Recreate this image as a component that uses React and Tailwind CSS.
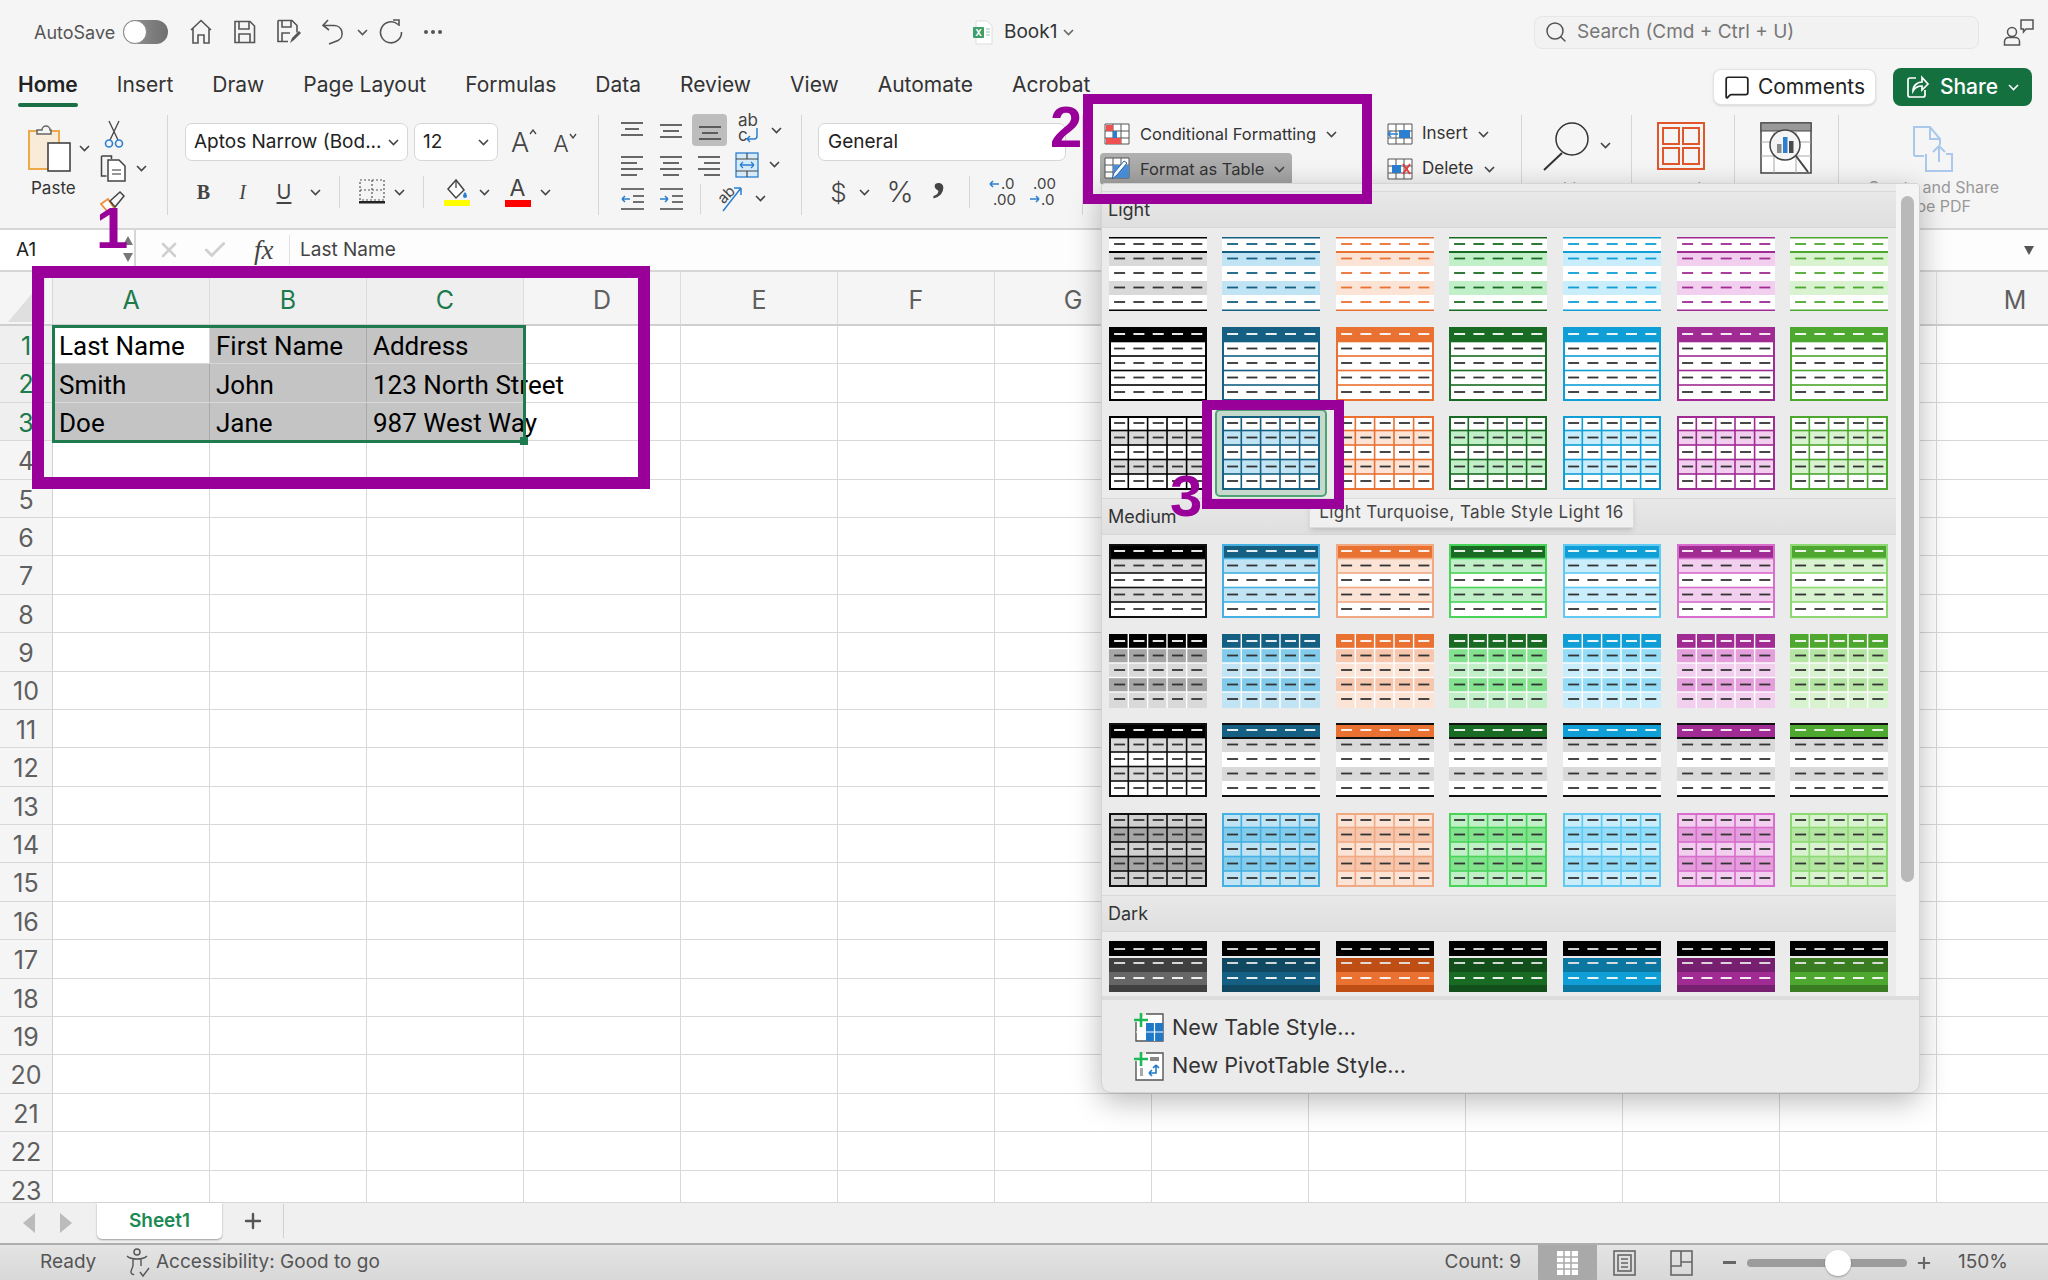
import React from 'react';
import { Search, X, Check, Plus, MessageSquare } from 'lucide-react';

const accent = ['#000000', '#156082', '#e97132', '#196b24', '#0f9ed5', '#a02b93', '#4ea72e'];
const tint20 = ['#d9d9d9', '#c1e4f5', '#fbe3d6', '#c1f0c8', '#caedfb', '#f2ceef', '#d9f2d0'];
const tint40 = ['#a6a6a6', '#83cbeb', '#f6c6ad', '#83e28e', '#95dcf7', '#e59edc', '#b4e5a2'];
const border60 = ['#111111', '#45b0e1', '#f1a983', '#47d459', '#60caf3', '#d86dcd', '#8ed973'];
const darkBand = ['#404040', '#104862', '#bf4e14', '#124f1a', '#0b76a0', '#76206f', '#3a7c22'];
const darkMid = ['#666666', '#156082', '#e97132', '#196b24', '#0f9ed5', '#a02b93', '#4ea72e'];

const columns = ['A', 'B', 'C', 'D', 'E', 'F', 'G', 'H', 'I', 'J', 'K', 'L', 'M'];
const rowNumbers = Array.from({ length: 23 }, (_, i) => i + 1);
const sheetData = [
  ['Last Name', 'First Name', 'Address'],
  ['Smith', 'John', '123 North Street'],
  ['Doe', 'Jane', '987 West Way'],
];
const tabs = ['Insert', 'Draw', 'Page Layout', 'Formulas', 'Data', 'Review', 'View', 'Automate', 'Acrobat'];

const Chev = ({ className = '', color = '#444' }) => (
  <svg width="11" height="7" viewBox="0 0 11 7" className={className}>
    <path d="M1 1l4.5 4.5L10 1" fill="none" stroke={color} strokeWidth="1.6" />
  </svg>
);

// horizontal bars used by all the alignment buttons
const Lines = ({ rows, w = 24, h = 22 }) => (
  <svg width={w} height={h} viewBox={`0 0 ${w} ${h}`}>
    {rows.map(([x1, x2, y], i) => (
      <line key={i} x1={x1} x2={x2} y1={y} y2={y} stroke="#444" strokeWidth="1.6" />
    ))}
  </svg>
);

const Dashes = ({ y, color }) => (
  <>
    {[0, 1, 2, 3, 4].map((i) => (
      <rect key={i} x={5.1 + 19.3 * i} y={y - 0.9} width="11" height="1.8" fill={color} />
    ))}
  </>
);

const cy = (i) => 7 + 14.5 * i;
const Rows = [0, 1, 2, 3, 4];
const colLines = [19.3, 38.6, 58, 77.6];

const Thumb = ({ kind, col }) => {
  const c = accent[col];
  const t = tint20[col];
  const m = tint40[col];
  const b = border60[col];
  const ink = '#333';
  const grid = (color, sw = 1.6) => (
    <>
      {[14.5, 29, 43.5, 58].map((y) => (
        <rect key={y} x="0" y={y - sw / 2} width="98" height={sw} fill={color} />
      ))}
      {colLines.map((x) => (
        <rect key={x} x={x - sw / 2} y="0" width={sw} height="74" fill={color} />
      ))}
    </>
  );
  const hLines = (color, sw = 1.6) =>
    [14.5, 29, 43.5, 58].map((y) => <rect key={y} x="0" y={y - sw / 2} width="98" height={sw} fill={color} />);
  const frame = (color) => <rect x="1" y="1" width="96" height="72" fill="none" stroke={color} strokeWidth="2" />;

  let body = null;
  if (kind === 'light1') {
    body = (
      <>
        <rect width="98" height="74" fill="#fff" />
        <rect y="15" width="98" height="14" fill={t} />
        <rect y="44" width="98" height="14" fill={t} />
        <rect width="98" height="1.5" fill={c} />
        <rect y="14" width="98" height="2" fill={c} />
        <rect y="72.5" width="98" height="1.5" fill={c} />
        {Rows.map((i) => <Dashes key={i} y={cy(i)} color={col === 0 ? '#333' : c} />)}
      </>
    );
  } else if (kind === 'light2') {
    body = (
      <>
        <rect width="98" height="74" fill="#fff" />
        <rect width="98" height="15" fill={c} />
        {hLines(c)}
        {frame(c)}
        {Rows.map((i) => <Dashes key={i} y={cy(i)} color={i === 0 ? '#fff' : ink} />)}
      </>
    );
  } else if (kind === 'light3') {
    body = (
      <>
        <rect width="98" height="74" fill="#fff" />
        <rect y="15" width="98" height="14" fill={t} />
        <rect y="44" width="98" height="14" fill={t} />
        {grid(c)}
        {frame(c)}
        {Rows.map((i) => <Dashes key={i} y={cy(i)} color={ink} />)}
      </>
    );
  } else if (kind === 'med1') {
    body = (
      <>
        <rect width="98" height="74" fill="#fff" />
        <rect y="15" width="98" height="14" fill={t} />
        <rect y="44" width="98" height="14" fill={t} />
        <rect width="98" height="15" fill={c} />
        {hLines(b)}
        {frame(b)}
        {Rows.map((i) => <Dashes key={i} y={cy(i)} color={i === 0 ? '#fff' : ink} />)}
      </>
    );
  } else if (kind === 'med2') {
    body = (
      <>
        <rect width="98" height="15" fill={c} />
        <rect y="15" width="98" height="14.5" fill={m} />
        <rect y="29.5" width="98" height="14.5" fill={t} />
        <rect y="44" width="98" height="14.5" fill={m} />
        <rect y="58.5" width="98" height="15.5" fill={t} />
        {grid('#ffffff', 1.4)}
        {Rows.map((i) => <Dashes key={i} y={cy(i)} color={i === 0 ? '#fff' : ink} />)}
      </>
    );
  } else if (kind === 'med3') {
    body = col === 0 ? (
      <>
        <rect width="98" height="74" fill="#fff" />
        <rect y="15" width="98" height="14" fill="#d9d9d9" />
        <rect y="44" width="98" height="14" fill="#d9d9d9" />
        {grid('#111')}
        <rect width="98" height="15" fill="#000" />
        {frame('#111')}
        {Rows.map((i) => <Dashes key={i} y={cy(i)} color={i === 0 ? '#fff' : ink} />)}
      </>
    ) : (
      <>
        <rect width="98" height="74" fill="#fff" />
        <rect y="1" width="98" height="14" fill={c} />
        <rect y="15" width="98" height="14" fill="#d9d9d9" />
        <rect y="44" width="98" height="14" fill="#d9d9d9" />
        <rect width="98" height="2" fill="#111" />
        <rect y="14" width="98" height="2" fill="#111" />
        <rect y="72" width="98" height="2" fill="#111" />
        {Rows.map((i) => <Dashes key={i} y={cy(i)} color={i === 0 ? '#fff' : ink} />)}
      </>
    );
  } else if (kind === 'med4') {
    const light = col === 0 ? '#d0d0d0' : t;
    const line = col === 0 ? '#111' : b;
    body = (
      <>
        <rect width="98" height="74" fill={light} />
        <rect y="15" width="98" height="14" fill={m} />
        <rect y="44" width="98" height="14" fill={m} />
        {grid(line)}
        {frame(line)}
        {Rows.map((i) => <Dashes key={i} y={cy(i)} color={ink} />)}
      </>
    );
  } else {
    body = (
      <>
        <rect width="98" height="15" fill="#000" />
        <rect y="17" width="98" height="14" fill={darkBand[col]} />
        <rect y="31" width="98" height="13" fill={darkMid[col]} />
        <rect y="44" width="98" height="7" fill={darkBand[col]} />
        <Dashes y={8} color="#e8e8e8" />
        <Dashes y={22} color="#e8e8e8" />
        <Dashes y={37} color="#ffffff" />
      </>
    );
  }
  return (
    <svg width="98" height={kind === 'dark' ? 51 : 74} viewBox={`0 0 98 ${kind === 'dark' ? 51 : 74}`} className="block">
      {body}
    </svg>
  );
};

const SectionHeader = ({ label }) => (
  <div className="h-[37px] pl-[6px] flex items-center text-[18px] text-[#333] bg-gradient-to-b from-[#e8e8e8] to-[#dfdfdf] border-t border-b border-[#d8d8d8]">
    {label}
  </div>
);

const ThumbGrid = ({ kinds }) => (
  <div className="grid grid-cols-[repeat(7,98px)] gap-x-[15.6px] gap-y-[15.6px] pl-[6.6px] pt-[9px] pb-[8px]">
    {kinds.map((kind, r) =>
      accent.map((_, col) => {
        const selected = kind === 'light3' && col === 1;
        return (
          <div key={`${r}-${col}`} className="relative">
            {selected && (
              <div className="absolute -left-[7px] -right-[7px] -top-[7px] -bottom-[7px] rounded-[5px] bg-[#c5d9cd] border-2 border-[#4fa377]" />
            )}
            <div className="relative">
              <Thumb kind={kind} col={col} />
            </div>
          </div>
        );
      })
    )}
  </div>
);

const TableStylePopup = () => (
  <div className="absolute left-[1101px] top-[183px] w-[819px] h-[910px] z-20 rounded-b-[10px] rounded-t-[4px] bg-[#ebebeb] shadow-[0_8px_30px_rgba(0,0,0,0.28)] border border-[#d4d4d4] flex flex-col overflow-hidden">
    <div className="flex h-[812px] pt-[7px] shrink-0">
      <div className="w-[795px] overflow-hidden">
        <SectionHeader label="Light" />
        <ThumbGrid kinds={['light1', 'light2', 'light3']} />
        <SectionHeader label="Medium" />
        <ThumbGrid kinds={['med1', 'med2', 'med3', 'med4']} />
        <SectionHeader label="Dark" />
        <ThumbGrid kinds={['dark']} />
      </div>
      <div className="w-[23px] bg-[#f4f4f4] pl-[5px] pt-[4px] -mt-[7px]">
        <div className="w-[13px] h-[686px] mt-[8px] rounded-full bg-[#b9b9b9]" />
      </div>
    </div>
    <div className="flex-1 border-t-[4px] border-[#dcdcdc] pl-[32px] pt-[8px] text-[21.6px] text-[#333]">
      <div className="h-[38px] flex items-center gap-[8px]">
        <NewTableIcon />
        <span>New Table Style...</span>
      </div>
      <div className="h-[39px] flex items-center gap-[8px]">
        <NewPivotIcon />
        <span>New PivotTable Style...</span>
      </div>
    </div>
  </div>
);

const NewTableIcon = () => (
  <svg width="30" height="30" viewBox="0 0 30 30">
    <path d="M2 10v19h27V2H12" fill="#fff" stroke="#555" strokeWidth="1.4" />
    <rect x="12" y="11" width="17" height="18" fill="#1f78c8" />
    <path d="M20.5 11v18M12 20h17M2 20h10" stroke="#fff" strokeWidth="1.2" />
    <path d="M7 1v14M0 8h14" stroke="#1db954" strokeWidth="2.6" />
  </svg>
);

const NewPivotIcon = () => (
  <svg width="30" height="30" viewBox="0 0 30 30">
    <path d="M2 10v19h27V2H12" fill="#fff" stroke="#555" strokeWidth="1.4" />
    <rect x="16" y="6" width="9" height="4" fill="#888" />
    <rect x="6" y="17" width="3" height="8" fill="#aaa" />
    <path d="M22 14v8h-7M15 22l3-3M15 22l3 3M22 14l-3 3M22 14l3 3" fill="none" stroke="#1f78c8" strokeWidth="1.6" />
    <path d="M7 1v14M0 8h14" stroke="#1db954" strokeWidth="2.6" />
  </svg>
);

const TitleBar = () => (
  <div className="h-[56px] pt-[8px] shrink-0 flex items-center text-[#555]">
    <div className="w-[973px] flex items-center pl-[34px]">
      <span className="text-[18px] text-[#555] w-[89px]">AutoSave</span>
      <div className="w-[45px] h-[24px] rounded-full bg-gradient-to-r from-[#9a9a9a] to-[#6f6f6f] relative">
        <div className="absolute left-0 top-0 w-[24px] h-[24px] rounded-full bg-white border border-[#888]" />
      </div>
      <svg width="24" height="26" viewBox="0 0 24 26" className="ml-[21px]">
        <path d="M2 11 12 1.5 22 11M4 9v15h5v-8h6v8h5V9" fill="none" stroke="#555" strokeWidth="1.6" />
      </svg>
      <svg width="23" height="24" viewBox="0 0 23 24" className="ml-[20px]">
        <path d="M2 1.5h15l4.5 4.5v16.5H2z" fill="none" stroke="#555" strokeWidth="1.6" />
        <path d="M6 2v7h10V2M6 22v-8h11v8" fill="none" stroke="#555" strokeWidth="1.6" />
      </svg>
      <svg width="26" height="26" viewBox="0 0 26 26" className="ml-[20px]">
        <path d="M2 1.5h14l5 5v7M2 1.5v21h10M6 2v6h9V2M6 22v-8h8" fill="none" stroke="#555" strokeWidth="1.6" />
        <path d="M14 24l2-5 7-7 2 2-7 7z" fill="#555" />
      </svg>
      <svg width="24" height="26" viewBox="0 0 24 26" className="ml-[19px]">
        <path d="M7 1 2 6.5 8 11M2.5 6.5H13a8 8 0 0 1 4 15L8 25" fill="none" stroke="#555" strokeWidth="1.6" />
      </svg>
      <Chev className="ml-[12px]" color="#555" />
      <svg width="24" height="26" viewBox="0 0 24 26" className="ml-[11px]">
        <path d="M19 5.5A10.5 10.5 0 1 0 22.5 13M14 1h6v6" fill="none" stroke="#555" strokeWidth="1.6" />
      </svg>
      <span className="ml-[21px] flex gap-[3px]">
        <i className="w-[4px] h-[4px] rounded-full bg-[#555]" />
        <i className="w-[4px] h-[4px] rounded-full bg-[#555]" />
        <i className="w-[4px] h-[4px] rounded-full bg-[#555]" />
      </span>
    </div>
    <div className="w-[561px] flex items-center">
      <svg width="21" height="25" viewBox="0 0 21 25">
        <path d="M3 1h11l5 5v18H3z" fill="#fff" stroke="#ddd" />
        <rect y="7" width="11" height="11" rx="1" fill="#3f9e6a" />
        <text x="5.5" y="16" textAnchor="middle" fontSize="9" fontWeight="700" fill="#fff">X</text>
        <path d="M13 9h4M13 12h4M13 15h4" stroke="#9ac4ac" strokeWidth="1.2" />
      </svg>
      <span className="ml-[10px] text-[19px] text-[#333]">Book1</span>
      <Chev className="ml-[6px]" color="#666" />
    </div>
    <div className="w-[445px] h-[33px] rounded-[8px] border border-[#e6e6e6] bg-[#f2f2f2] flex items-center pl-[9px] text-[19px] text-[#777] gap-[9px]">
      <Search size={24} strokeWidth={1.5} color="#555" />
      <span>Search (Cmd + Ctrl + U)</span>
    </div>
    <svg width="32" height="27" viewBox="0 0 32 27" className="ml-[24px]">
      <circle cx="9" cy="13" r="4.5" fill="none" stroke="#555" strokeWidth="1.5" />
      <path d="M1.5 26v-3.5a4 4 0 0 1 4-4h7a4 4 0 0 1 4 4V26z" fill="none" stroke="#555" strokeWidth="1.5" />
      <path d="M18 1h12v9h-7l-2.5 3v-3H18z" fill="none" stroke="#555" strokeWidth="1.5" />
    </svg>
  </div>
);

const TabsRow = () => (
  <div className="h-[54px] shrink-0 flex items-start pl-[18px] text-[21px] text-[#333]">
    <div className="flex gap-[39px] h-[54px] pt-[13px]">
      <div className="relative font-semibold text-[#222]">
        Home
        <div className="absolute left-0 right-0 top-[34px] h-[4px] rounded-full bg-[#1a7044]" />
      </div>
      {tabs.map((t) => (
        <div key={t}>{t}</div>
      ))}
    </div>
    <div className="ml-auto mt-[12px] flex items-center">
      <div className="w-[163px] h-[36px] rounded-[8px] bg-white border border-[#e2e2e2] shadow-sm flex items-center justify-center gap-[8px] text-[#222]">
        <MessageSquare size={26} strokeWidth={1.6} color="#222" />
        <span>Comments</span>
      </div>
      <div className="ml-[17px] mr-[16px] w-[139px] h-[38px] rounded-[8px] bg-[#14713f] text-white font-medium flex items-center justify-center gap-[10px]">
        <svg width="24" height="24" viewBox="0 0 24 24" fill="none" stroke="#fff" strokeWidth="1.7">
          <path d="M10 3H4a2 2 0 0 0-2 2v15a2 2 0 0 0 2 2h13a2 2 0 0 0 2-2v-5M7 16c0-6 5-9 9-9V2.500l6 6.500-6 6v-4c-4 0-7 1.500-9 5z" />
        </svg>
        <span>Share</span>
        <Chev color="#fff" />
      </div>
    </div>
  </div>
);

const ClipboardGroup = () => (
  <div className="w-[168px] h-[100px] shrink-0 border-r border-[#d6d6d6] flex pl-[27px]">
    <div className="w-[73px] pt-[8px]">
      <div className="flex items-center">
        <svg width="46" height="50" viewBox="0 0 46 50">
          <rect x="2" y="8" width="30" height="38" fill="#f8ecd9" stroke="#eda84a" strokeWidth="2" />
          <path d="M10 11V7h5a4 4 0 0 1 8 0h1v4z" fill="#f4f4f4" stroke="#666" strokeWidth="1.5" />
          <rect x="21" y="20" width="22" height="28" fill="#fff" stroke="#444" strokeWidth="1.6" />
        </svg>
        <Chev className="ml-[6px]" />
      </div>
      <div className="text-[17px] text-[#333] mt-[3px] pl-[4px]">Paste</div>
    </div>
    <div className="flex flex-col pt-[5px]">
      <svg width="20" height="28" viewBox="0 0 20 28" className="ml-[4px]">
        <path d="M5 1l9 19M15 1 6 20" stroke="#444" strokeWidth="1.3" fill="none" />
        <circle cx="5" cy="23.500" r="3.500" fill="none" stroke="#2a7fd1" strokeWidth="1.6" />
        <circle cx="15" cy="23.500" r="3.500" fill="none" stroke="#2a7fd1" strokeWidth="1.6" />
      </svg>
      <div className="flex items-center mt-[7px]">
        <svg width="28" height="27" viewBox="0 0 28 27">
          <path d="M1.500 1h10v3M1.500 1v20h5" fill="none" stroke="#444" strokeWidth="1.5" />
          <path d="M8 5h11l6 6v15H8z" fill="#fff" stroke="#444" strokeWidth="1.5" />
          <path d="M12 15h9M12 19h9" stroke="#777" strokeWidth="1.3" />
        </svg>
        <Chev className="ml-[8px]" />
      </div>
      <svg width="28" height="24" viewBox="0 0 28 24" className="mt-[7px]">
        <path d="M1 15l7-5 6 9-6 4z" fill="#fff" stroke="#ef8d3a" strokeWidth="1.8" />
        <path d="M10 12 20 3l4 4-9 11z" fill="none" stroke="#444" strokeWidth="1.5" />
      </svg>
    </div>
  </div>
);

const Select = ({ width, label, className = '' }) => (
  <div className={`${width} h-[38px] rounded-[7px] bg-white border border-[#d6d6d6] flex items-center pl-[8px] pr-[8px] text-[19px] text-[#222] justify-between ${className}`}>
    <span className="truncate">{label}</span>
    <Chev />
  </div>
);

const FontGroup = () => (
  <div className="w-[431px] h-[100px] shrink-0 border-r border-[#d6d6d6] pl-[17px] pt-[8px]">
    <div className="flex items-center">
      <Select width="w-[223px]" label="Aptos Narrow (Bod..." />
      <Select width="w-[84px]" label="12" className="ml-[6px]" />
      <div className="ml-[13px] text-[27px] text-[#444] font-light leading-none relative">
        A
        <svg width="8" height="6" viewBox="0 0 8 6" className="absolute -right-[8px] top-0">
          <path d="M1 5l3-4 3 4" fill="none" stroke="#444" strokeWidth="1.300" />
        </svg>
      </div>
      <div className="ml-[24px] text-[23px] text-[#444] font-light leading-none relative mt-[4px]">
        A
        <svg width="8" height="6" viewBox="0 0 8 6" className="absolute -right-[8px] top-0">
          <path d="M1 1l3 4 3-4" fill="none" stroke="#444" strokeWidth="1.300" />
        </svg>
      </div>
    </div>
    <div className="flex items-center h-[32px] mt-[15px] text-[#444]">
      <div className="w-[37px] text-center text-[20px] font-bold font-['Liberation_Serif',serif]">B</div>
      <div className="w-[41px] text-center text-[20px] italic font-['Liberation_Serif',serif]">I</div>
      <div className="w-[42px] text-center text-[20px] underline underline-offset-[3px]">U</div>
      <Chev className="ml-[5px]" />
      <div className="ml-[18px] w-px h-[32px] bg-[#d6d6d6]" />
      <svg width="26" height="26" viewBox="0 0 26 26" className="ml-[19px]">
        <path d="M1 1h24v20H1zM13 1v20M1 11h24" fill="none" stroke="#555" strokeWidth="1.2" strokeDasharray="2 2" />
        <rect x="0" y="22" width="26" height="2.500" fill="#222" />
      </svg>
      <Chev className="ml-[9px]" />
      <div className="ml-[18px] w-px h-[32px] bg-[#d6d6d6]" />
      <svg width="28" height="28" viewBox="0 0 28 28" className="ml-[19px]">
        <path d="M13 2 5 11l8 9 8-8z" fill="#fff" stroke="#444" strokeWidth="1.500" />
        <path d="M13 2v8" stroke="#444" strokeWidth="1.300" />
        <path d="M22 14c1.500 2 2 3 2 4a2 2 0 0 1-4 0c0-1 .500-2 2-4z" fill="#2a7fd1" />
        <rect x="1" y="22" width="26" height="6" fill="#ffff00" />
      </svg>
      <Chev className="ml-[8px]" />
      <div className="ml-[14px] w-[27px] h-[32px] flex flex-col items-center text-[#444] text-[23px] leading-[24px]">
        A
        <div className="w-[26px] h-[7px] bg-[#ff0000]" />
      </div>
      <Chev className="ml-[9px]" />
    </div>
  </div>
);

const AlignGroup = () => (
  <div className="w-[203px] h-[100px] shrink-0 border-r border-[#d6d6d6] pl-[22px] flex flex-col">
    <div className="flex items-center h-[36px] -mt-[2px]">
      <div className="w-[38px]"><Lines rows={[[0, 22, 4], [4, 18, 10], [0, 22, 16]]} /></div>
      <div className="w-[33px]"><Lines rows={[[1, 23, 6], [4, 20, 12], [1, 23, 18]]} /></div>
      <div className="w-[35px] h-[32px] rounded-[4px] bg-[#bdbdbd] flex items-center justify-center">
        <Lines rows={[[1, 23, 8], [4, 20, 14], [1, 23, 20]]} />
      </div>
      <svg width="24" height="34" viewBox="0 0 24 34" className="ml-[10px]">
        <text x="1" y="13" fontSize="17" fill="#444">ab</text>
        <text x="1" y="28" fontSize="17" fill="#444">c</text>
        <path d="M20 15v8a3 3 0 0 1-3 3h-7M10 26l3-3M10 26l3 3" fill="none" stroke="#2a7fd1" strokeWidth="1.500" />
      </svg>
      <Chev className="ml-[10px]" />
    </div>
    <div className="flex items-center h-[36px]">
      <div className="w-[38px]"><Lines rows={[[0, 22, 3], [0, 16, 9], [0, 22, 15], [0, 16, 21]]} /></div>
      <div className="w-[38px]"><Lines rows={[[1, 23, 3], [4, 20, 9], [1, 23, 15], [4, 20, 21]]} /></div>
      <div className="w-[38px]"><Lines rows={[[1, 23, 3], [7, 23, 9], [1, 23, 15], [7, 23, 21]]} /></div>
      <svg width="24" height="26" viewBox="0 0 24 26">
        <rect x="1" y="1" width="22" height="24" fill="#d6eaf8" stroke="#2a7fd1" strokeWidth="1.300" />
        <path d="M1 7h22M1 19h22M12 1v6M12 19v6" stroke="#444" strokeWidth="1.200" />
        <path d="M5 13h14M5 13l3-3M5 13l3 3M19 13l-3-3M19 13l-3 3" fill="none" stroke="#2a7fd1" strokeWidth="1.300" />
      </svg>
      <Chev className="ml-[10px]" />
    </div>
    <div className="flex items-center h-[34px]">
      <div className="w-[38px]">
        <svg width="24" height="22" viewBox="0 0 24 22">
          <path d="M0 1h23M12 8h11M12 14h11M0 21h23" stroke="#444" strokeWidth="1.600" />
          <path d="M1 11h8M1 11l3-3M1 11l3 3" fill="none" stroke="#2a7fd1" strokeWidth="1.500" />
        </svg>
      </div>
      <div className="w-[35px]">
        <svg width="24" height="22" viewBox="0 0 24 22">
          <path d="M1 1h23M13 8h11M13 14h11M1 21h23" stroke="#444" strokeWidth="1.600" />
          <path d="M1 11h8M9 11l-3-3M9 11l-3 3" fill="none" stroke="#2a7fd1" strokeWidth="1.500" />
        </svg>
      </div>
      <div className="w-px h-[30px] bg-[#d6d6d6] ml-[6px]" />
      <svg width="30" height="30" viewBox="0 0 30 30" className="ml-[16px]">
        <text x="1" y="17" fontSize="15" fill="#444" transform="rotate(-45 8 12)">ab</text>
        <path d="M6 27 24 4M24 4h-7M24 4v7" fill="none" stroke="#2a7fd1" strokeWidth="1.500" />
      </svg>
      <Chev className="ml-[8px]" />
    </div>
  </div>
);

const NumberGroup = () => (
  <div className="w-[281px] h-[100px] shrink-0 border-r border-[#d6d6d6] pl-[16px] pt-[8px]">
    <div className="w-[248px] h-[38px] rounded-[7px] bg-white border border-[#d6d6d6] flex items-center pl-[9px] text-[19px] text-[#222]">
      General
    </div>
    <div className="flex items-center h-[32px] mt-[15px] pl-[10px] text-[#444]">
      <span className="text-[26px] font-light w-[21px] text-center">$</span>
      <Chev className="ml-[10px]" />
      <span className="text-[29px] font-light ml-[14px] w-[32px] text-center">%</span>
      <span className="text-[50px] ml-[15px] w-[16px] text-center font-bold leading-[50px] -mt-[38px] font-['Liberation_Serif',serif]">,</span>
      <div className="ml-[22px] w-px h-[32px] bg-[#d6d6d6]" />
      <svg width="27" height="30" viewBox="0 0 27 30" className="ml-[19px]">
        <text x="12" y="12" fontSize="15" fill="#444">.0</text>
        <text x="4" y="28" fontSize="15" fill="#444">.00</text>
        <path d="M1 7h9M1 7l3-3M1 7l3 3" fill="none" stroke="#2a7fd1" strokeWidth="1.500" />
      </svg>
      <svg width="27" height="30" viewBox="0 0 27 30" className="ml-[13px]">
        <text x="4" y="12" fontSize="15" fill="#444">.00</text>
        <text x="12" y="28" fontSize="15" fill="#444">.0</text>
        <path d="M1 22h9M10 22l-3-3M10 22l-3 3" fill="none" stroke="#2a7fd1" strokeWidth="1.500" />
      </svg>
    </div>
  </div>
);

const gridCells = 'M1 1h24v20H1zM9 1v20M17 1v20M1 8h24M1 15h24';

const StylesGroup = () => (
  <div className="w-[291px] h-[100px] shrink-0 pl-[21px] pt-[2px] text-[16.5px] text-[#333]">
    <div className="flex items-center h-[32px] mt-[1px]">
      <svg width="26" height="22" viewBox="0 0 26 22">
        <path d={gridCells} fill="#fff" stroke="#555" strokeWidth="1" />
        <rect x="2" y="2" width="7" height="6" fill="#f05050" />
        <rect x="2" y="15" width="15" height="6" fill="#f05050" />
        <rect x="9" y="8" width="4" height="7" fill="#2a7fd1" />
      </svg>
      <span className="ml-[10px]">Conditional Formatting</span>
      <Chev className="ml-[10px]" />
    </div>
    <div className="flex items-center h-[32px] mt-[3px] -ml-[4px] pl-[4px] w-[192px] rounded-[4px] bg-gradient-to-b from-[#b0b0b0] to-[#a0a0a0]">
      <svg width="26" height="24" viewBox="0 0 26 24">
        <path d={gridCells} fill="#fff" stroke="#555" strokeWidth="1" />
        <rect x="9" y="8" width="16" height="13" fill="#4a90d9" />
        <path d="M8 22l2-6 10-12 3 2-10 12z" fill="#fff" stroke="#2a6ab0" strokeWidth="1" />
      </svg>
      <span className="ml-[10px]">Format as Table</span>
      <Chev className="ml-[10px]" />
    </div>
  </div>
);

const CellsGroup = () => (
  <div className="w-[148px] h-[100px] shrink-0 pl-[13px] pt-[3px] text-[17px] text-[#333] border-r border-[#d6d6d6]">
    <div className="flex items-center h-[32px]">
      <svg width="26" height="22" viewBox="0 0 26 22">
        <path d={gridCells} fill="#fff" stroke="#555" strokeWidth="1" />
        <rect x="12" y="7" width="11" height="8" fill="#2a7fd1" />
        <path d="M1 11h10M1 11l3-3M1 11l3 3" fill="none" stroke="#2a7fd1" strokeWidth="1.500" />
      </svg>
      <span className="ml-[9px]">Insert</span>
      <Chev className="ml-[10px]" />
    </div>
    <div className="flex items-center h-[32px] mt-[3px]">
      <svg width="26" height="22" viewBox="0 0 26 22">
        <path d={gridCells} fill="#fff" stroke="#555" strokeWidth="1" />
        <rect x="5" y="7" width="9" height="8" fill="#2a7fd1" />
        <path d="M16 6l7 10M23 6l-7 10" stroke="#e23a3a" strokeWidth="1.800" />
      </svg>
      <span className="ml-[9px]">Delete</span>
      <Chev className="ml-[10px]" />
    </div>
  </div>
);

const BigGroup = ({ width, label, children, padding }) => (
  <div className={`${width} h-[100px] shrink-0 border-r border-[#d6d6d6] ${padding} pt-[7px] flex flex-col`}>
    <div className="h-[54px] flex items-start">{children}</div>
    <div className="text-[17px] text-[#333] mt-[2px]">{label}</div>
  </div>
);

const Ribbon = () => (
  <div className="h-[118px] shrink-0 flex pt-[5px]">
    <ClipboardGroup />
    <FontGroup />
    <AlignGroup />
    <NumberGroup />
    <StylesGroup />
    <CellsGroup />
    <BigGroup width="w-[110px]" label="Editing" padding="pl-[20px]">
      <svg width="48" height="50" viewBox="0 0 48 50">
        <circle cx="30" cy="17" r="16" fill="none" stroke="#333" strokeWidth="1.500" />
        <path d="M20 31 2 48" stroke="#333" strokeWidth="2" />
      </svg>
      <Chev className="ml-[10px] mt-[20px]" />
    </BigGroup>
    <BigGroup width="w-[103px]" label="Add-ins" padding="pl-[25px]">
      <svg width="48" height="48" viewBox="0 0 48 48" fill="none" stroke="#e0572c" strokeWidth="2">
        <rect x="1" y="1" width="46" height="46" />
        <rect x="6" y="6" width="16" height="16" />
        <rect x="26" y="6" width="16" height="16" />
        <rect x="6" y="26" width="16" height="16" />
        <rect x="26" y="26" width="16" height="16" />
      </svg>
    </BigGroup>
    <BigGroup width="w-[104px]" label="Analyze" padding="pl-[25px]">
      <svg width="52" height="52" viewBox="0 0 52 52">
        <rect x="1" y="1" width="50" height="50" fill="#fff" stroke="#444" strokeWidth="1.500" />
        <rect x="1" y="1" width="50" height="8" fill="#999" stroke="#444" />
        <path d="M1 20h50M1 34h50M14 9v42M36 9v42" stroke="#aaa" strokeWidth="1" />
        <circle cx="25" cy="23" r="15" fill="#f4f4f4" stroke="#444" strokeWidth="1.500" />
        <rect x="17" y="22" width="4.500" height="9" fill="#888" />
        <rect x="23" y="15" width="4.500" height="16" fill="#2a7fd1" />
        <rect x="29" y="19" width="4.500" height="12" fill="#4a4a4a" />
        <path d="M36 34 48 50" stroke="#444" strokeWidth="2" />
      </svg>
    </BigGroup>
    <div className="flex-1 h-[100px] pl-[73px] pt-[11px]">
      <svg width="42" height="46" viewBox="0 0 42 46" fill="none" stroke="#a9c8ec" strokeWidth="2">
        <path d="M2 30V1h16l10 12v6M18 1v12h10M2 30h10" />
        <path d="M14 28v17h26V28h-6M27 36V20M21 26l6-6 6 6" />
      </svg>
      <div className="text-[16px] text-[#999] leading-[19px] mt-[6px] whitespace-nowrap -ml-[80px]">
        <div className="text-right w-[167px]">Create and Share</div>
        <div className="text-right w-[139px]">Adobe PDF</div>
      </div>
    </div>
  </div>
);

const FormulaBar = () => (
  <div className="h-[44px] shrink-0 flex items-center border-t-[2px] border-b-[2px] border-[#d6d6d6] bg-[#fdfdfd]">
    <div className="w-[136px] h-full bg-white border-r-[2px] border-[#d6d6d6] flex items-center pl-[16px] text-[19px] text-[#222] relative">
      A1
      <div className="absolute right-[1px] top-[6px] flex flex-col gap-[8px]">
        <div className="w-0 h-0 border-l-[5px] border-r-[5px] border-b-[9px] border-l-transparent border-r-transparent border-b-[#777]" />
        <div className="w-0 h-0 border-l-[5px] border-r-[5px] border-t-[9px] border-l-transparent border-r-transparent border-t-[#777]" />
      </div>
    </div>
    <X size={24} strokeWidth={2.6} color="#d0d0d0" className="ml-[21px]" />
    <Check size={26} strokeWidth={2.6} color="#d0d0d0" className="ml-[21px]" />
    <span className="ml-[26px] text-[27px] italic font-['Liberation_Serif',serif] text-[#444] w-[35px]">fx</span>
    <div className="w-px h-[30px] bg-[#e0e0e0]" />
    <span className="ml-[10px] text-[19px] text-[#444]">Last Name</span>
    <div className="ml-auto mr-[14px] w-0 h-0 border-l-[5px] border-r-[5px] border-t-[9px] border-l-transparent border-r-transparent border-t-[#555]" />
  </div>
);

const Sheet = () => (
  <div className="flex-1 min-h-0 overflow-hidden relative bg-white">
    <div className="flex h-[54px] bg-[#f5f5f5] border-b-[2px] border-[#cfcfcf]">
      <div className="w-[53px] shrink-0 border-r border-[#d8d8d8] pl-[8px] pt-[6px]">
        <svg width="38" height="44" viewBox="0 0 38 44"><path d="M37 0v44H0z" fill="#dfdfdf" /></svg>
      </div>
      {columns.map((c, i) => (
        <div
          key={c}
          className={`w-[157px] shrink-0 pt-[5px] border-r border-[#dcdcdc] flex items-center justify-center text-[25px] ${i < 3 ? 'bg-[#efefef] text-[#1d7a4d]' : 'text-[#5f5f5f]'}`}
        >
          {c}
        </div>
      ))}
    </div>
    {rowNumbers.map((n, r) => (
      <div key={n} className="flex h-[38.4px] border-b border-[#d8d8d8]">
        <div className={`w-[53px] shrink-0 pt-[4px] border-r border-[#d0d0d0] flex items-center justify-center text-[25px] ${r < 3 ? 'bg-[#efefef] text-[#1d7a4d]' : 'bg-[#f5f5f5] text-[#5f5f5f]'}`}>
          {n}
        </div>
        {columns.map((c, i) => {
          const inRange = r < 3 && i < 3;
          const gray = inRange && !(r === 0 && i === 0);
          return (
            <div
              key={c}
              className={`w-[157px] shrink-0 pt-[4px] border-r flex items-center pl-[6px] text-[26px] text-black whitespace-nowrap font-['Roboto',sans-serif] ${gray ? 'bg-[#c4c4c4] border-[#a9a9a9]' : 'border-[#d8d8d8]'}`}
            >
              {inRange ? sheetData[r][i] : ''}
            </div>
          );
        })}
      </div>
    ))}
    {/* selection box lies over the cells */}
    <div className="absolute left-[52px] top-[53px] w-[474px] h-[118px] border-[3px] border-[#1f7a4f] pointer-events-none">
      <div className="absolute -right-[5px] -bottom-[5px] w-[8px] h-[8px] bg-[#1f7a4f]" />
    </div>
  </div>
);

const SheetTabs = () => (
  <div className="h-[41px] shrink-0 flex bg-[#f0f0f0] border-t border-[#d6d6d6]">
    <div className="w-[97px] flex items-center pl-[23px] gap-[25px]">
      <div className="w-0 h-0 border-t-[10px] border-b-[10px] border-r-[12px] border-t-transparent border-b-transparent border-r-[#bbb]" />
      <div className="w-0 h-0 border-t-[10px] border-b-[10px] border-l-[12px] border-t-transparent border-b-transparent border-l-[#bbb]" />
    </div>
    <div className="w-[125px] h-[36px] rounded-b-[5px] bg-white shadow-[0_1px_2px_rgba(0,0,0,0.35)] flex items-center justify-center text-[19px] font-semibold text-[#1d8a55]">
      Sheet1
    </div>
    <div className="w-[62px] h-[34px] mt-[1px] border-r border-[#d0d0d0] flex items-center justify-center">
      <Plus size={24} strokeWidth={2.4} color="#555" />
    </div>
  </div>
);

const StatusBar = () => (
  <div className="h-[37px] shrink-0 flex items-center bg-gradient-to-b from-[#e4e4e4] to-[#d8d8d8] border-t-[2px] border-[#aeaeae] text-[19px] text-[#555]">
    <span className="ml-[40px] w-[86px]">Ready</span>
    <svg width="26" height="30" viewBox="0 0 26 30" fill="none" stroke="#555" strokeWidth="1.400">
      <circle cx="11" cy="4" r="3" />
      <path d="M1 8c3 3 6 3 10 3s7 0 10-3M7 11v6c0 3-2 4-2 7 0 2 2 3 3 2M15 11v7" />
      <path d="M14 24l3 4 6-8" />
    </svg>
    <span className="ml-[4px]">Accessibility: Good to go</span>
    <span className="ml-auto">Count: 9</span>
    <div className="ml-[17px] w-[59px] h-full bg-[#a9a9a9] flex items-center justify-center">
      <svg width="21" height="24" viewBox="0 0 21 24">
        <rect width="21" height="24" fill="#fff" />
        <path d="M7 0v24M14 0v24M0 6h21M0 12h21M0 18h21" stroke="#a9a9a9" strokeWidth="1.500" />
      </svg>
    </div>
    <svg width="23" height="26" viewBox="0 0 23 26" fill="none" stroke="#666" strokeWidth="1.600" className="ml-[16px]">
      <rect x="1" y="1" width="21" height="24" />
      <rect x="5" y="5" width="13" height="16" />
      <path d="M8 9h7M8 13h7M8 17h7" />
    </svg>
    <svg width="23" height="26" viewBox="0 0 23 26" fill="none" stroke="#666" strokeWidth="1.600" className="ml-[34px]">
      <rect x="1" y="1" width="21" height="24" />
      <path d="M1 16h10V1M11 12h11" />
    </svg>
    <div className="ml-[30px] w-[13px] h-[3px] bg-[#666]" />
    <div className="ml-[11px] w-[160px] h-[8px] rounded-full bg-[#9c9c9c] relative">
      <div className="absolute left-[78px] -top-[9px] w-[26px] h-[26px] rounded-full bg-white shadow-[0_1px_2px_rgba(0,0,0,0.3)]" />
    </div>
    <Plus size={18} strokeWidth={2.8} color="#666" className="ml-[8px]" />
    <span className="ml-[25px] mr-[40px]">150%</span>
  </div>
);

const Frame = ({ className }) => (
  <div className={`absolute border-[#990099] pointer-events-none z-30 ${className}`} />
);

const Step = ({ className, children }) => (
  <div className={`absolute z-30 text-[58px] leading-[58px] font-bold text-[#990099] font-['Liberation_Sans',sans-serif] ${className}`}>
    {children}
  </div>
);

export default function App() {
  return (
    <div className="relative w-[2048px] h-[1280px] overflow-hidden bg-[#f5f5f5] flex flex-col font-['Inter',sans-serif]">
      <TitleBar />
      <TabsRow />
      <Ribbon />
      <FormulaBar />
      <Sheet />
      <SheetTabs />
      <StatusBar />
      <TableStylePopup />

      {/* tooltip on the hovered table style */}
      <div className="absolute left-[1309px] top-[498px] w-[325px] h-[30px] z-20 bg-[#f0f0f0] border border-[#dcdcdc] shadow-md flex items-center justify-center text-[17px] tracking-[0.4px] text-[#444]">
        Light Turquoise, Table Style Light 16
      </div>

      {/* tutorial annotations */}
      <Frame className="left-[32px] top-[266px] w-[618px] h-[223px] border-[12px]" />
      <Frame className="left-[1083px] top-[94px] w-[289px] h-[110px] border-[10px]" />
      <Frame className="left-[1202px] top-[400px] w-[142px] h-[109px] border-[10px]" />
      <Step className="left-[96px] top-[199px]">1</Step>
      <Step className="left-[1050px] top-[98px]">2</Step>
      <Step className="left-[1170px] top-[467px]">3</Step>
    </div>
  );
}
